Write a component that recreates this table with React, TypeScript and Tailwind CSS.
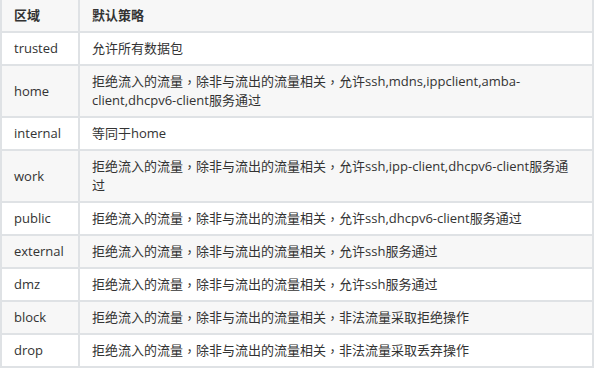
import React from 'react';

const rows: [string, string][] = [
  ['trusted', '允许所有数据包'],
  ['home', '拒绝流入的流量，除非与流出的流量相关，允许ssh,mdns,ippclient,amba-client,dhcpv6-client服务通过'],
  ['internal', '等同于home'],
  ['work', '拒绝流入的流量，除非与流出的流量相关，允许ssh,ipp-client,dhcpv6-client服务通过'],
  ['public', '拒绝流入的流量，除非与流出的流量相关，允许ssh,dhcpv6-client服务通过'],
  ['external', '拒绝流入的流量，除非与流出的流量相关，允许ssh服务通过'],
  ['dmz', '拒绝流入的流量，除非与流出的流量相关，允许ssh服务通过'],
  ['block', '拒绝流入的流量，除非与流出的流量相关，非法流量采取拒绝操作'],
  ['drop', '拒绝流入的流量，除非与流出的流量相关，非法流量采取丢弃操作'],
];

// the full-width comma is drawn centred in the reference
const Policy = ({ text }: { text: string }) => (
  <>
    {text.split('，').map((part, i) => (
      <React.Fragment key={i}>
        {i > 0 && (
          <span className="align-top" style={{ fontFamily: '"Noto Sans CJK TC", sans-serif' }}>
            ，
          </span>
        )}
        {part}
      </React.Fragment>
    ))}
  </>
);

export default function App() {
  return (
    <div
      className="w-[596px] h-[368px] overflow-hidden bg-white text-[13px] leading-[19px] text-[#333]"
      style={{ fontFamily: '"Open Sans", "Noto Sans CJK SC", sans-serif' }}
    >
      <table className="w-[594px] border-collapse">
        <thead>
          <tr className="bg-[#f7f7f7]">
            <th className="w-[78px] border-2 border-t-0 border-[#dfe2e5] px-3 py-[6px] text-left font-bold">区域</th>
            <th className="border-2 border-t-0 border-[#dfe2e5] px-3 py-[6px] text-left font-bold">默认策略</th>
          </tr>
        </thead>
        <tbody>
          {rows.map(([zone, policy], i) => (
            <tr key={zone} className={i % 2 === 1 ? 'bg-[#f7f7f7]' : 'bg-white'}>
              <td className="border-2 border-[#dfe2e5] px-3 py-[6px] align-middle">{zone}</td>
              <td className="border-2 border-[#dfe2e5] px-3 py-[6px] align-middle">
                <Policy text={policy} />
              </td>
            </tr>
          ))}
        </tbody>
      </table>
    </div>
  );
}
